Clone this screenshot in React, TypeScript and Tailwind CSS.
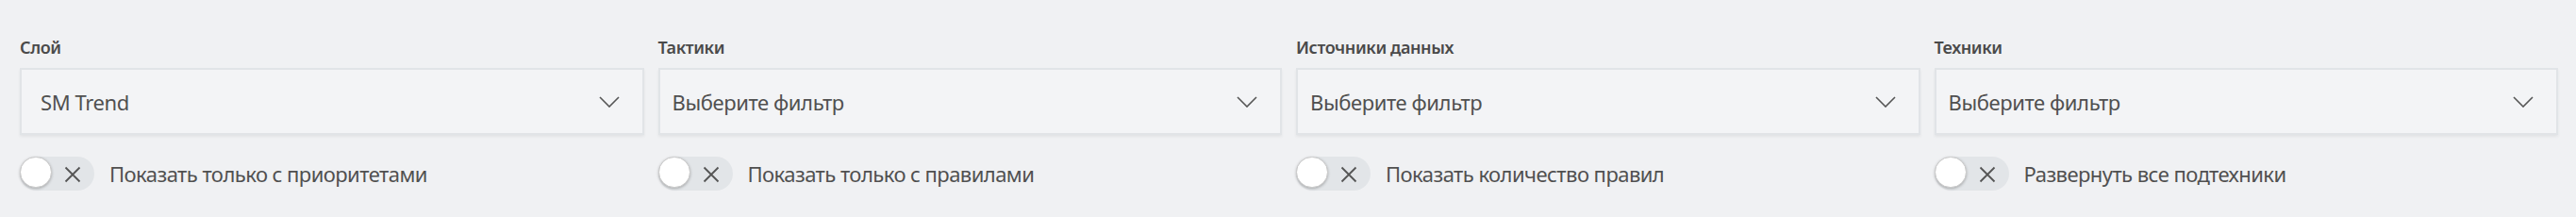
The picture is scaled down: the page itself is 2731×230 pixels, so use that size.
import React from 'react';

interface Filter {
  label: string;
  value: string;
  toggle: string;
}

const filters: Filter[] = [
  { label: 'Слой', value: 'SM Trend', toggle: 'Показать только с приоритетами' },
  { label: 'Тактики', value: 'Выберите фильтр', toggle: 'Показать только с правилами' },
  { label: 'Источники данных', value: 'Выберите фильтр', toggle: 'Показать количество правил' },
  { label: 'Техники', value: 'Выберите фильтр', toggle: 'Развернуть все подтехники' },
];

const Chevron: React.FC = () => (
  <svg width="22" height="12" viewBox="0 0 22 12" fill="none" className="shrink-0">
    <path d="M1 1L11 11L21 1" stroke="#555" strokeWidth="1.6" />
  </svg>
);

const Toggle: React.FC = () => (
  <div className="flex h-[36px] w-[79px] shrink-0 items-start rounded-full bg-[#e2e5e8]">
    <div className="h-[33px] w-[34px] rounded-full border border-[#c9c9c9] bg-white shadow-[0_1px_3px_rgba(0,0,0,0.25)]" />
    <svg width="18" height="18" viewBox="0 0 18 18" fill="none" className="ml-[13px] mt-[10px]">
      <path d="M1.5 1.5L16.5 16.5M16.5 1.5L1.5 16.5" stroke="#555" strokeWidth="1.8" />
    </svg>
  </div>
);

const App: React.FC = () => {
  return (
    <div className="min-h-screen bg-[#f0f1f3] font-['Noto_Sans',sans-serif] text-[#505050]">
      <div className="grid grid-cols-4 gap-x-[15px] pl-[21px] pr-[19px] pt-[38px]">
        {filters.map((f, i) => (
          <div key={f.label} className="flex flex-col">
            <label className="mb-[9px] text-[18px] font-semibold leading-[25px] tracking-[-0.4px] text-[#4a4a4a]">
              {f.label}
            </label>
            <div
              className={`flex h-[71px] items-center justify-between border-2 border-[#e1e4e7] bg-[#f3f4f6] pr-[24px] shadow-[0_2px_3px_rgba(0,0,0,0.06)] ${
                i === 0 ? 'pl-[20px]' : 'pl-[13px]'
              }`}
            >
              <span className="text-[22px] leading-[30px] tracking-[-0.4px]">{f.value}</span>
              <Chevron />
            </div>
            <div className="mt-[23px] flex items-center gap-[16px]">
              <Toggle />
              <span className="text-[22px] leading-[30px] tracking-[-0.55px]">{f.toggle}</span>
            </div>
          </div>
        ))}
      </div>
    </div>
  );
};

export default App;
